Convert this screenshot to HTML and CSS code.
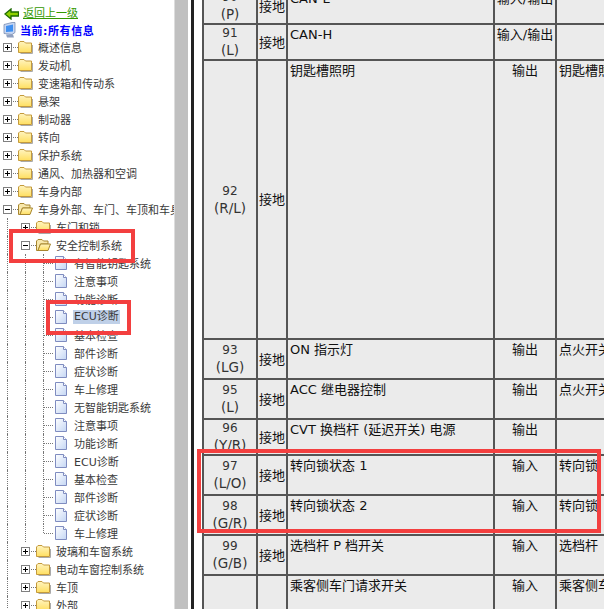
FILE: index.html
```html
<!DOCTYPE html>
<html lang="zh">
<head>
<meta charset="utf-8">
<title>ECU诊断</title>
<link rel="stylesheet" href="styles.css">
</head>
<body>
<div class="app">
  <nav class="side">
    <a class="back" href="#"><svg class="ico-back" viewBox="0 0 15 12"><path d="M1 6 7 1v3h7.500v4H7v3z" fill="#8fd000" stroke="#1c6a00" stroke-width="1.300"/></svg><span>返回上一级</span></a>
    <div class="current"><svg class="ico-pc" viewBox="0 0 13 16"><path d="M1 2.500 9 .5h3v10l-3 2-8-1z" fill="#c6d6f2" stroke="#6a7fa8" stroke-width=".7"/><path d="M3 4 10 2.500v7L3 10z" fill="#3f8ff0"/><path d="M3 12.500h7l1 3H4z" fill="#8fa0c0"/></svg><b>当前:所有信息</b></div>
    <ul class="tree">
      <li><svg class="tg" viewBox="0 0 11 11"><use href="#plus"/></svg><i class="dash"></i><svg class="fd" viewBox="0 0 15 14"><use href="#folder"/></svg><span>概述信息</span></li>
      <li><svg class="tg" viewBox="0 0 11 11"><use href="#plus"/></svg><i class="dash"></i><svg class="fd" viewBox="0 0 15 14"><use href="#folder"/></svg><span>发动机</span></li>
      <li><svg class="tg" viewBox="0 0 11 11"><use href="#plus"/></svg><i class="dash"></i><svg class="fd" viewBox="0 0 15 14"><use href="#folder"/></svg><span>变速箱和传动系</span></li>
      <li><svg class="tg" viewBox="0 0 11 11"><use href="#plus"/></svg><i class="dash"></i><svg class="fd" viewBox="0 0 15 14"><use href="#folder"/></svg><span>悬架</span></li>
      <li><svg class="tg" viewBox="0 0 11 11"><use href="#plus"/></svg><i class="dash"></i><svg class="fd" viewBox="0 0 15 14"><use href="#folder"/></svg><span>制动器</span></li>
      <li><svg class="tg" viewBox="0 0 11 11"><use href="#plus"/></svg><i class="dash"></i><svg class="fd" viewBox="0 0 15 14"><use href="#folder"/></svg><span>转向</span></li>
      <li><svg class="tg" viewBox="0 0 11 11"><use href="#plus"/></svg><i class="dash"></i><svg class="fd" viewBox="0 0 15 14"><use href="#folder"/></svg><span>保护系统</span></li>
      <li><svg class="tg" viewBox="0 0 11 11"><use href="#plus"/></svg><i class="dash"></i><svg class="fd" viewBox="0 0 15 14"><use href="#folder"/></svg><span>通风、加热器和空调</span></li>
      <li><svg class="tg" viewBox="0 0 11 11"><use href="#plus"/></svg><i class="dash"></i><svg class="fd" viewBox="0 0 15 14"><use href="#folder"/></svg><span>车身内部</span></li>
      <li><svg class="tg" viewBox="0 0 11 11"><use href="#minus"/></svg><i class="dash"></i><svg class="fd" viewBox="0 0 15 14"><use href="#folder-open"/></svg><span>车身外部、车门、车顶和车身</span></li>
      <li><i class="g"></i><svg class="tg" viewBox="0 0 11 11"><use href="#plus"/></svg><i class="dash"></i><svg class="fd" viewBox="0 0 15 14"><use href="#folder"/></svg><span>车门和锁</span></li>
      <li><i class="g"></i><svg class="tg" viewBox="0 0 11 11"><use href="#minus"/></svg><i class="dash"></i><svg class="fd" viewBox="0 0 15 14"><use href="#folder-open"/></svg><span>安全控制系统</span></li>
      <li class="leaf"><i class="g"></i><i class="g"></i><i class="g t"></i><svg class="dc" viewBox="0 0 12 14"><use href="#doc"/></svg><span>有智能钥匙系统</span></li>
      <li class="leaf"><i class="g"></i><i class="g"></i><i class="g t"></i><svg class="dc" viewBox="0 0 12 14"><use href="#doc"/></svg><span>注意事项</span></li>
      <li class="leaf"><i class="g"></i><i class="g"></i><i class="g t"></i><svg class="dc" viewBox="0 0 12 14"><use href="#doc"/></svg><span>功能诊断</span></li>
      <li class="leaf"><i class="g"></i><i class="g"></i><i class="g t"></i><svg class="dc" viewBox="0 0 12 14"><use href="#doc"/></svg><span class="sel">ECU诊断</span></li>
      <li class="leaf"><i class="g"></i><i class="g"></i><i class="g t"></i><svg class="dc" viewBox="0 0 12 14"><use href="#doc"/></svg><span>基本检查</span></li>
      <li class="leaf"><i class="g"></i><i class="g"></i><i class="g t"></i><svg class="dc" viewBox="0 0 12 14"><use href="#doc"/></svg><span>部件诊断</span></li>
      <li class="leaf"><i class="g"></i><i class="g"></i><i class="g t"></i><svg class="dc" viewBox="0 0 12 14"><use href="#doc"/></svg><span>症状诊断</span></li>
      <li class="leaf"><i class="g"></i><i class="g"></i><i class="g t"></i><svg class="dc" viewBox="0 0 12 14"><use href="#doc"/></svg><span>车上修理</span></li>
      <li class="leaf"><i class="g"></i><i class="g"></i><i class="g t"></i><svg class="dc" viewBox="0 0 12 14"><use href="#doc"/></svg><span>无智能钥匙系统</span></li>
      <li class="leaf"><i class="g"></i><i class="g"></i><i class="g t"></i><svg class="dc" viewBox="0 0 12 14"><use href="#doc"/></svg><span>注意事项</span></li>
      <li class="leaf"><i class="g"></i><i class="g"></i><i class="g t"></i><svg class="dc" viewBox="0 0 12 14"><use href="#doc"/></svg><span>功能诊断</span></li>
      <li class="leaf"><i class="g"></i><i class="g"></i><i class="g t"></i><svg class="dc" viewBox="0 0 12 14"><use href="#doc"/></svg><span>ECU诊断</span></li>
      <li class="leaf"><i class="g"></i><i class="g"></i><i class="g t"></i><svg class="dc" viewBox="0 0 12 14"><use href="#doc"/></svg><span>基本检查</span></li>
      <li class="leaf"><i class="g"></i><i class="g"></i><i class="g t"></i><svg class="dc" viewBox="0 0 12 14"><use href="#doc"/></svg><span>部件诊断</span></li>
      <li class="leaf"><i class="g"></i><i class="g"></i><i class="g t"></i><svg class="dc" viewBox="0 0 12 14"><use href="#doc"/></svg><span>症状诊断</span></li>
      <li class="leaf"><i class="g"></i><i class="g"></i><i class="g e"></i><svg class="dc" viewBox="0 0 12 14"><use href="#doc"/></svg><span>车上修理</span></li>
      <li><i class="g"></i><svg class="tg" viewBox="0 0 11 11"><use href="#plus"/></svg><i class="dash"></i><svg class="fd" viewBox="0 0 15 14"><use href="#folder"/></svg><span>玻璃和车窗系统</span></li>
      <li><i class="g"></i><svg class="tg" viewBox="0 0 11 11"><use href="#plus"/></svg><i class="dash"></i><svg class="fd" viewBox="0 0 15 14"><use href="#folder"/></svg><span>电动车窗控制系统</span></li>
      <li><i class="g"></i><svg class="tg" viewBox="0 0 11 11"><use href="#plus"/></svg><i class="dash"></i><svg class="fd" viewBox="0 0 15 14"><use href="#folder"/></svg><span>车顶</span></li>
      <li><i class="g"></i><svg class="tg" viewBox="0 0 11 11"><use href="#plus"/></svg><i class="dash"></i><svg class="fd" viewBox="0 0 15 14"><use href="#folder"/></svg><span>外部</span></li>
    </ul>
  </nav>
  <div class="scroll"></div>
  <div class="split"></div>
  <main class="content">
    <table class="pins">
      <colgroup><col class="c1"><col class="c2"><col class="c3"><col class="c4"><col class="c5"></colgroup>
      <tr class="r36"><td class="num"><span class="pin">90</span><span class="wire">(P)</span></td><td class="gnd">接地</td><td>CAN-L</td><td class="dir">输入/输出</td><td></td></tr>
      <tr class="r36"><td class="num"><span class="pin">91</span><span class="wire">(L)</span></td><td class="gnd">接地</td><td>CAN-H</td><td class="dir">输入/输出</td><td></td></tr>
      <tr class="r-tall"><td class="num"><span class="pin">92</span><span class="wire">(R/L)</span></td><td class="gnd">接地</td><td>钥匙槽照明</td><td class="dir">输出</td><td><span class="cut">钥匙槽照明</span></td></tr>
      <tr class="r40"><td class="num"><span class="pin">93</span><span class="wire">(LG)</span></td><td class="gnd">接地</td><td>ON 指示灯</td><td class="dir">输出</td><td><span class="cut">点火开关</span></td></tr>
      <tr class="r40"><td class="num"><span class="pin">95</span><span class="wire">(L)</span></td><td class="gnd">接地</td><td>ACC 继电器控制</td><td class="dir">输出</td><td><span class="cut">点火开关</span></td></tr>
      <tr class="r36"><td class="num"><span class="pin">96</span><span class="wire">(Y/R)</span></td><td class="gnd">接地</td><td>CVT 换档杆 (延迟开关) 电源</td><td class="dir">输出</td><td></td></tr>
      <tr class="r40"><td class="num"><span class="pin">97</span><span class="wire">(L/O)</span></td><td class="gnd">接地</td><td>转向锁状态 1</td><td class="dir">输入</td><td><span class="cut">转向锁</span></td></tr>
      <tr class="r40"><td class="num"><span class="pin">98</span><span class="wire">(G/R)</span></td><td class="gnd">接地</td><td>转向锁状态 2</td><td class="dir">输入</td><td><span class="cut">转向锁</span></td></tr>
      <tr class="r40"><td class="num"><span class="pin">99</span><span class="wire">(G/B)</span></td><td class="gnd">接地</td><td>选档杆 P 档开关</td><td class="dir">输入</td><td><span class="cut">选档杆</span></td></tr>
      <tr class="r-last"><td class="num"></td><td class="gnd"></td><td>乘客侧车门请求开关</td><td class="dir">输入</td><td><span class="cut">乘客侧车门</span></td></tr>
    </table>
  </main>
  <i class="mark m1"></i><i class="mark m2"></i><i class="mark m3"></i>
</div>
<svg class="defs" width="0" height="0">
  <defs>
    <linearGradient id="fy" x1="0" y1="0" x2="0" y2="1"><stop offset="0" stop-color="#fff4c0"/><stop offset="1" stop-color="#ffdf60"/></linearGradient>
    <linearGradient id="dy" x1="0" y1="0" x2="1" y2="1"><stop offset="0" stop-color="#ffffff"/><stop offset="1" stop-color="#c4d6f4"/></linearGradient>
    <g id="plus"><rect x="1.500" y="1.500" width="8" height="8" fill="#fff" stroke="#808080"/><path d="M3 5.500h5M5.500 3v5" stroke="#000"/></g>
    <g id="minus"><rect x="1.500" y="1.500" width="8" height="8" fill="#fff" stroke="#808080"/><path d="M3 5.500h5" stroke="#000"/></g>
    <g id="folder"><path d="M14.500 5v8.500H2.500" fill="none" stroke="#aaa"/><path d="M.5 3 2 1.500h4L7.500 3h6v9.500H.5z" fill="url(#fy)" stroke="#c49a3c"/></g>
    <g id="folder-open"><path d="M.5 3 2 1.500h4L7.500 3h4.500v3H4.500L2 12.500H.5z" fill="#f8e8ac" stroke="#a8862e"/><path d="M4.500 6h10L12 12.500H2z" fill="url(#fy)" stroke="#a8862e"/></g>
    <g id="doc"><path d="M.5.500h8l3 3v10H.5z" fill="url(#dy)" stroke="#7f8cc0"/><path d="M8.500.5v3h3" fill="#fff" stroke="#7f8cc0"/></g>
  </defs>
</svg>
</body>
</html>
```

FILE: styles.css
```css
html, body { margin: 0; padding: 0; background: #fff; }
.app { position: relative; display: flex; width: 604px; height: 609px; overflow: hidden; font-family: "DejaVu Sans", "Noto Sans CJK SC", sans-serif; }

.side { flex: 0 0 174px; overflow: hidden; font-size: 11px; color: #3a3a3a; }
.back { display: flex; align-items: center; height: 13px; margin: 7px 0 0 4px; gap: 4px; color: #339900; text-decoration: underline; line-height: 13px; }
.ico-back { width: 15px; height: 12px; flex: none; }
.current { display: flex; align-items: center; height: 19px; margin: 0 0 0 3px; gap: 4px; color: #0000ff; letter-spacing: .55px; }
.ico-pc { width: 13px; height: 16px; flex: none; }
.tree { list-style: none; margin: -1px 0 0; padding: 0 0 0 2px; white-space: nowrap; }
.tree li { display: flex; align-items: center; height: 18px; }
.tg { width: 11px; height: 11px; flex: none; }
.dash { flex: none; width: 5px; height: 0; border-top: 1px dotted #777; }
.fd { width: 15px; height: 14px; flex: none; margin-right: 5px; }
.dc { width: 12px; height: 14px; flex: none; margin-right: 7px; }
.g { flex: none; box-sizing: border-box; width: 13px; height: 18px; margin-left: 5px; border-left: 1px dotted #777; }
.g.t, .g.e { position: relative; width: 12px; margin-left: 5px; }
.g.t::after, .g.e::after { content: ""; position: absolute; left: 0; right: 2px; top: 9px; border-top: 1px dotted #777; }
.g.e { height: 9px; align-self: flex-start; }
.sel { background: #bfd0e8; padding: 0 1px; margin-left: -1px; line-height: 14px; }

.scroll { flex: 0 0 14px; background: #c0c0c0; border-left: 1px solid #ddd; box-sizing: border-box; }
.split { flex: 0 0 6px; box-sizing: border-box; border-right: 3px solid #222; }

.content { flex: 1; min-width: 0; overflow: hidden; padding-left: 8px; }
.pins { table-layout: fixed; width: 430px; border-collapse: collapse; margin-top: -13px; background: #ebebeb; font-size: 13px; line-height: 17px; color: #111; }
.c1 { width: 54px; } .c2 { width: 30px; } .c3 { width: 207px; } .c4 { width: 62px; } .c5 { width: 77px; }
.pins td { border: 2px solid #555; padding: 1px 2px; vertical-align: top; overflow: hidden; }
.pins td.num { text-align: center; vertical-align: middle; color: #333; padding: 0; }
.pin { display: block; font-size: 12px; }
.wire { display: block; font-size: 13.500px; }
.pins td.gnd { vertical-align: middle; padding: 0 1px; white-space: nowrap; }
.pins td.dir { text-align: center; padding: 1px 0; white-space: nowrap; }
.cut { white-space: nowrap; }
.r40 { height: 40px; }
.r36 { height: 36px; }
.r-tall { height: 279px; }
.r-last { height: 60px; }

.mark { position: absolute; box-sizing: border-box; border: 4px solid #f33f3f; pointer-events: none; }
.m1 { left: 9px; top: 229px; width: 126px; height: 34px; }
.m2 { left: 46px; top: 300px; width: 85px; height: 35px; }
.m3 { left: 197px; top: 449px; width: 404px; height: 84px; }
.defs { position: absolute; }
```
